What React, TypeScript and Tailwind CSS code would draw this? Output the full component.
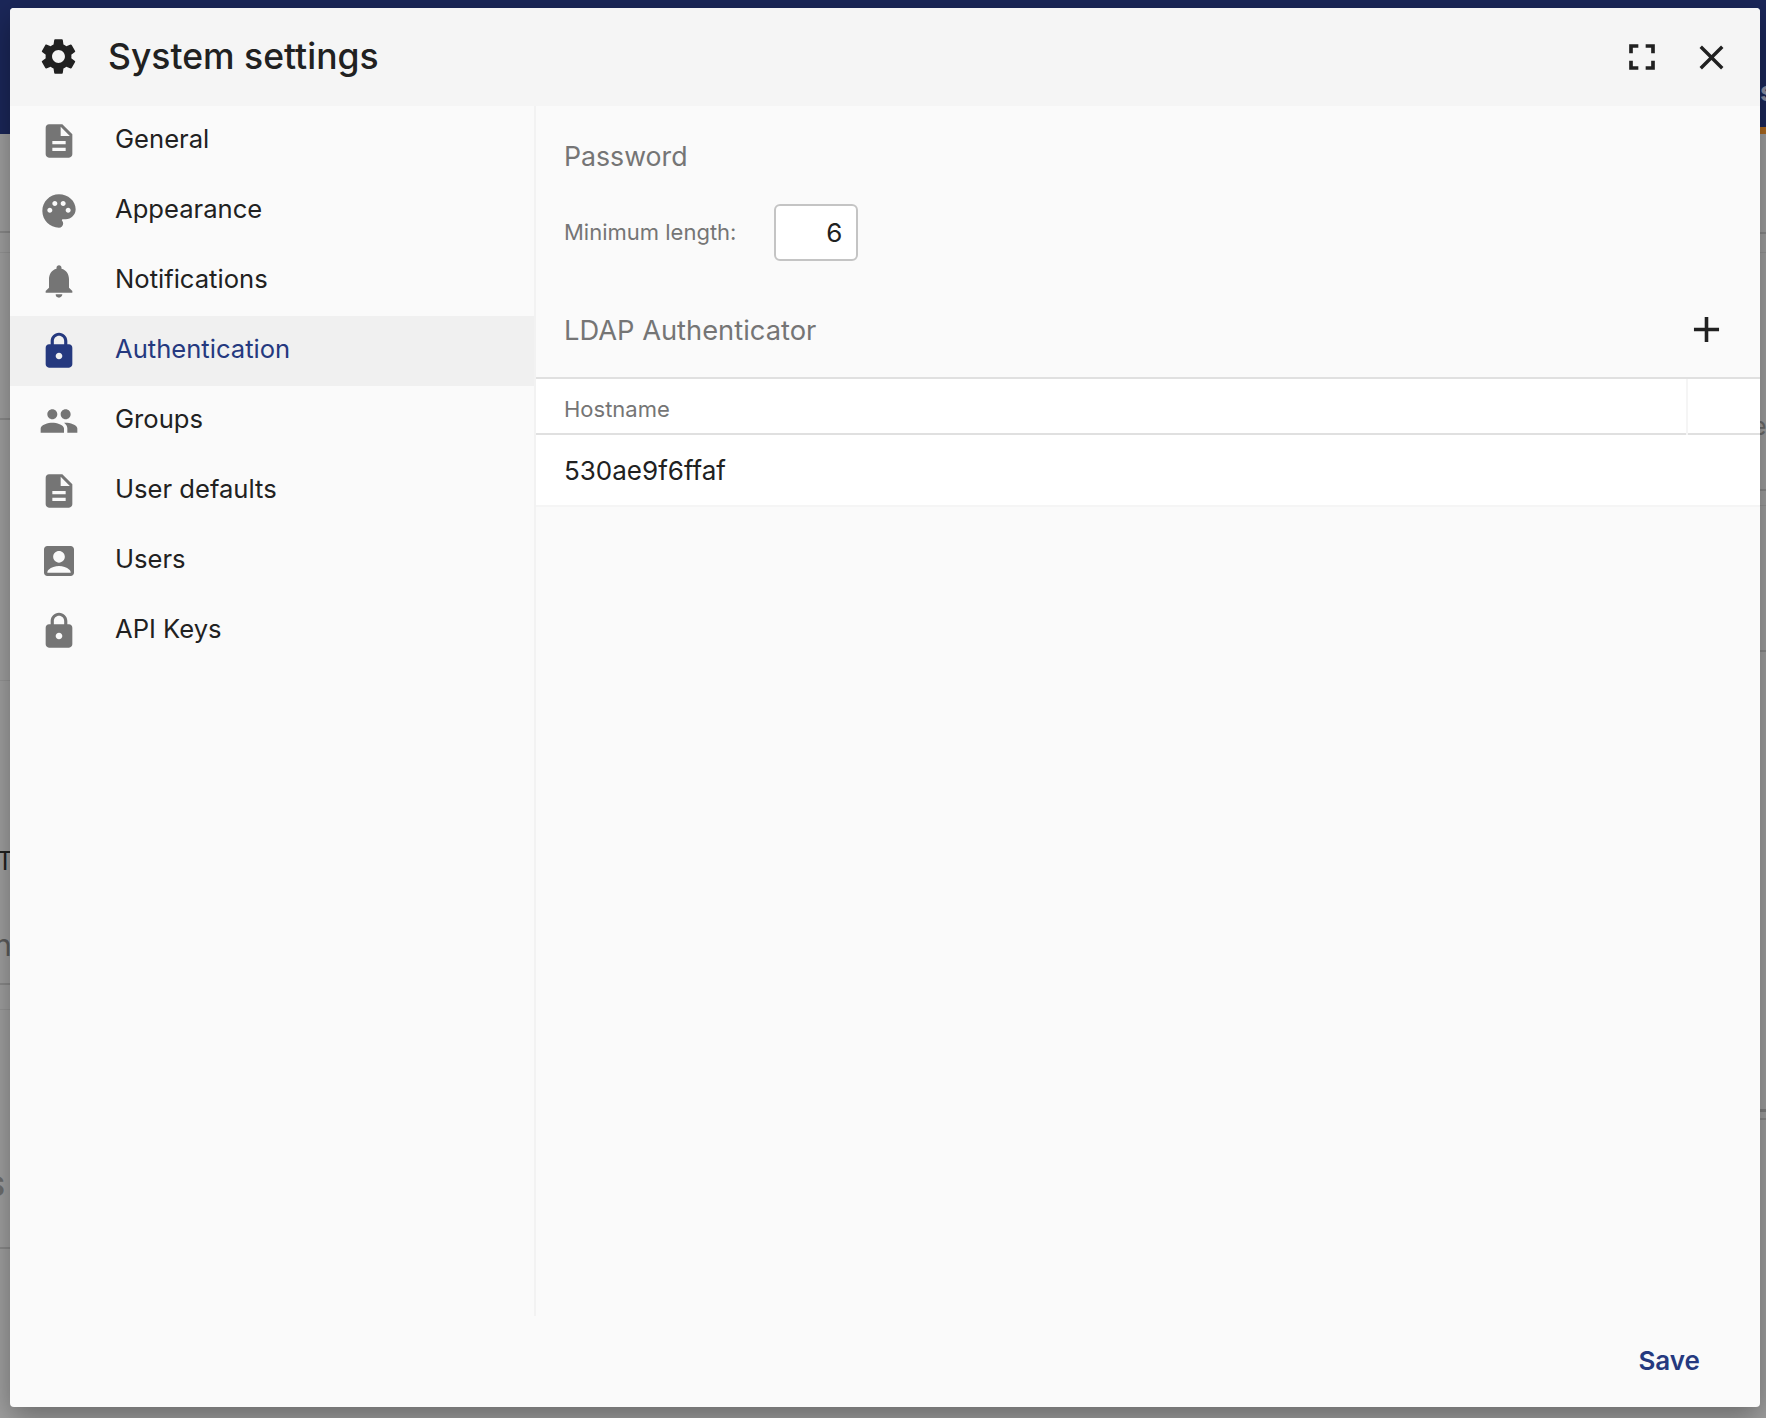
import React from 'react';
import {
  MdSettings,
  MdDescription,
  MdPalette,
  MdNotifications,
  MdLock,
  MdPeople,
  MdAccountBox,
  MdFullscreen,
  MdClose,
  MdAdd,
} from 'react-icons/md';

const navItems = [
  { label: 'General', icon: MdDescription },
  { label: 'Appearance', icon: MdPalette },
  { label: 'Notifications', icon: MdNotifications },
  { label: 'Authentication', icon: MdLock, active: true },
  { label: 'Groups', icon: MdPeople },
  { label: 'User defaults', icon: MdDescription },
  { label: 'Users', icon: MdAccountBox },
  { label: 'API Keys', icon: MdLock },
];

export default function App() {
  return (
    <div className="relative h-[1418px] w-[1766px] overflow-hidden bg-[#a0a0a0] font-['Inter',sans-serif]">
      {/* dimmed page behind the dialog, only its edges show */}
      <div className="flex h-[127px] justify-end bg-[#1b2759]">
        <span className="mt-[78px] w-[6px] whitespace-nowrap text-[27px] font-bold leading-[28px] text-[#8d91a6]">s</span>
      </div>
      <div className="flex h-[7px] bg-[#1b2759]">
        <div className="ml-auto h-full w-[200px] bg-[#ad6a20]" />
      </div>
      <div className="flex justify-between">
        <div className="flex w-[10px] flex-col">
          <div className="mt-[97px] h-[2px] bg-[#8a8a8a]" />
          <div className="mt-[19px] h-[1px] bg-[#959595]" />
          <div className="mt-[165px] h-[2px] bg-[#8a8a8a]" />
          <div className="mt-[260px] h-[1px] bg-[#959595]" />
          <span className="-ml-[3px] mt-[168px] whitespace-nowrap text-[25px] leading-[24px] text-[#222222]">T</span>
          <span className="-ml-[6px] mt-[57px] whitespace-nowrap text-[30px] leading-[30px] text-[#5c5c5c]">n</span>
          <div className="mt-[23px] h-[2px] bg-[#8a8a8a]" />
          <div className="mt-[24px] h-[1px] bg-[#959595]" />
          <span className="-ml-[13px] mt-[163px] whitespace-nowrap text-[27px] font-bold leading-[28px] text-[#6e6e6e]">S</span>
          <div className="mt-[46px] h-[2px] bg-[#8a8a8a]" />
        </div>
        <div className="flex w-[6px] flex-col">
          <div className="mt-[98px] h-[2px] bg-[#8a8a8a]" />
          <div className="mt-[18px] h-[1px] bg-[#959595]" />
          <span className="-ml-[8px] mt-[161px] whitespace-nowrap text-[25px] leading-[25px] text-[#6c6c6c]">e</span>
          <div className="mt-[50px] h-[2px] bg-[#8a8a8a]" />
          <div className="mt-[14px] h-[1px] bg-[#959595]" />
          <div className="mt-[144px] h-[2px] bg-[#8a8a8a]" />
          <div className="mt-[457px] h-[3px] bg-[#808080]" />
          <div className="mt-[6px] h-[2px] bg-[#8a8a8a]" />
        </div>
      </div>

      {/* dialog */}
      <div className="absolute left-[10px] top-[8px] flex h-[1399px] w-[1750px] flex-col rounded-[4px] bg-[#fafafa] shadow-[0_10px_30px_rgba(0,0,0,0.35)]">
        <header className="flex h-[98px] shrink-0 items-center rounded-t-[4px] bg-[#f5f5f5]">
          <MdSettings className="ml-[27px] -translate-y-[1px] text-[43px] text-[#212121]" />
          <h1 className="ml-[28px] text-[35.5px] font-medium text-[#212121]">System settings</h1>
          <MdFullscreen className="ml-auto text-[44px] text-[#212121]" />
          <MdClose className="ml-[27px] mr-[28px] text-[41px] text-[#212121]" />
        </header>

        <div className="flex min-h-0 flex-1">
          <nav className="h-[1210px] w-[526px] shrink-0 border-r-2 border-[#f2f2f2]">
            {navItems.map((item) => {
              const Icon = item.icon;
              return (
                <div
                  key={item.label}
                  className={`flex h-[70px] items-center ${item.active ? 'bg-[#f0f0f0] text-[#25397f]' : 'text-[#212121]'}`}
                >
                  <Icon className={`ml-[29px] text-[40px] ${item.active ? 'text-[#25397f]' : 'text-[#757575]'}`} />
                  <span className="ml-[36px] -translate-y-[2px] text-[25.6px]">{item.label}</span>
                </div>
              );
            })}
          </nav>

          <main className="min-w-0 flex-1">
            <h2 className="pl-[28px] pt-[32px] text-[26.7px] leading-[36px] text-[#757575]">Password</h2>
            <div className="mt-[30px] flex items-center pl-[28px]">
              <span className="text-[22px] text-[#757575]">Minimum length:</span>
              <input
                readOnly
                value="6"
                className="ml-[38px] h-[57px] w-[84px] rounded-[6px] border-2 border-[#c4c4c4] bg-white pr-[14px] text-right text-[26px] text-[#212121]"
              />
            </div>
            <div className="mt-[24px] flex h-[94px] items-center justify-between border-b-2 border-[#e0e0e0] pl-[28px] pr-[32px]">
              <h2 className="text-[27.3px] text-[#757575]">LDAP Authenticator</h2>
              <MdAdd className="-translate-y-[2px] text-[43px] text-[#212121]" />
            </div>
            <table className="w-full bg-white">
              <thead>
                <tr className="h-[55px] border-b-2 border-[#e0e0e0]">
                  <th className="pl-[28px] pt-[6px] text-left text-[22px] font-normal text-[#757575]">Hostname</th>
                  <th className="w-[73px] border-l-2 border-[#f5f5f5]" />
                </tr>
              </thead>
              <tbody>
                <tr className="h-[72px] border-b-2 border-[#f5f5f5]">
                  <td className="pl-[28px] text-[26px] text-[#212121]">530ae9f6ffaf</td>
                  <td />
                </tr>
              </tbody>
            </table>
          </main>
        </div>

        <footer className="flex justify-end pb-[28px] pr-[60px] text-[26px] font-semibold text-[#25397f]">
          <span className="leading-[36px]">Save</span>
        </footer>
      </div>
    </div>
  );
}
